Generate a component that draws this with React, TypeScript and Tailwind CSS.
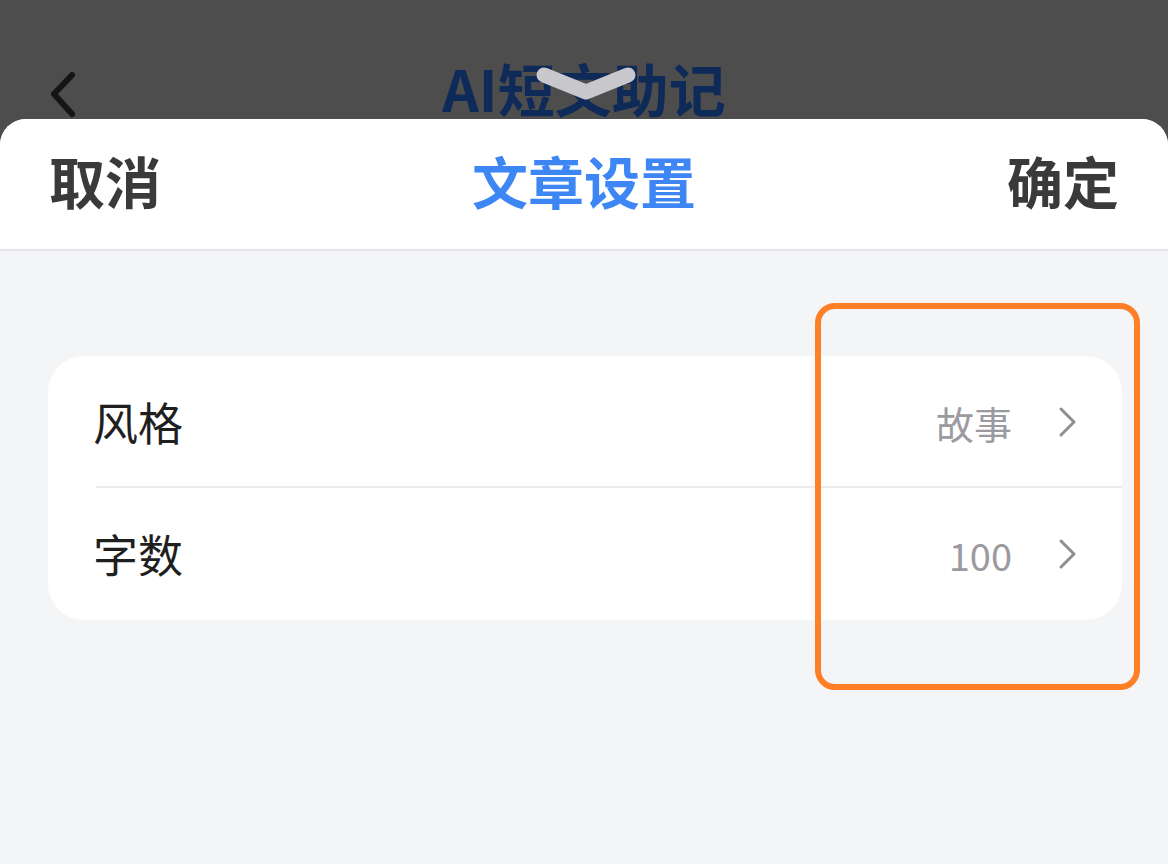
import React from "react";

const font = { fontFamily: '"Noto Sans CJK SC", "Noto Sans", sans-serif' };

function Chevron() {
  return (
    <svg width="22" height="32" viewBox="0 0 22 32" className="shrink-0">
      <path d="M4 3 L17 16 L4 29" fill="none" stroke="#8e8e93" strokeWidth="3" strokeLinecap="round" strokeLinejoin="round" />
    </svg>
  );
}

function Row({ label, value, divider }: { label: string; value: string; divider?: boolean }) {
  return (
    <div className="relative flex h-[132px] items-center pl-[45px] pr-[43px]">
      <span className="flex-1 text-[45px] text-[#1f1f1f]">{label}</span>
      <span className="text-[38px] text-[#9a9aa0]">{value}</span>
      <div className="ml-[45px]"><Chevron /></div>
      {divider && <div className="absolute bottom-0 left-[48px] right-0 h-[2px] bg-[#ebebed]" />}
    </div>
  );
}

export default function App() {
  return (
    <div className="relative h-[864px] w-[1168px] overflow-hidden bg-[#4d4d4d]" style={font}>
      {/* backdrop nav */}
      <div className="relative h-[119px]">
        <svg className="absolute left-[46px] top-[68px]" width="34" height="52" viewBox="0 0 34 52">
          <path d="M26 7 L8 26 L26 46" fill="none" stroke="#151515" strokeWidth="6" strokeLinecap="round" strokeLinejoin="round" />
        </svg>
        <div className="absolute left-0 right-0 top-[59px] text-center text-[57px] font-bold leading-none text-[#0e2a58]">
          AI短文助记
        </div>
        <svg className="absolute left-[530px] top-[60px]" width="112" height="48" viewBox="0 0 112 48">
          <path d="M14 15 L56 32 L98 15" fill="none" stroke="#c8c7cc" strokeWidth="15" strokeLinecap="round" strokeLinejoin="round" />
        </svg>
      </div>
      {/* sheet */}
      <div className="flex h-[745px] flex-col overflow-hidden rounded-t-[26px] bg-[#f4f5f7]">
        <div className="flex h-[132px] items-center justify-between border-b-2 border-[#e6e6e8] bg-white px-[49px] pb-[8px]">
          <span className="text-[56px] font-semibold text-[#3a3a3a]">取消</span>
          <span className="text-[56px] font-semibold text-[#3d86f4]">文章设置</span>
          <span className="text-[56px] font-semibold text-[#3a3a3a]">确定</span>
        </div>
        <div className="pl-[48px] pr-[46px] pt-[105px]">
          <div className="overflow-hidden rounded-[36px] bg-white">
            <Row label="风格" value="故事" divider />
            <Row label="字数" value="100" />
          </div>
        </div>
      </div>
      {/* annotation */}
      <div className="absolute left-[815px] top-[303px] h-[387px] w-[325px] rounded-[20px] border-[6px] border-[#ff7f27]" />
    </div>
  );
}
